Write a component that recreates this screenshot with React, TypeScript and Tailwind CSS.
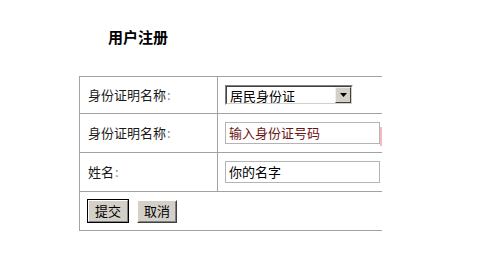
// 用户注册 form - classic table layout

const font = 'font-["Noto_Sans_CJK_SC","Noto_Sans",sans-serif]';

function Row({
  label,
  height,
  children,
}: {
  label: string;
  height: string;
  children: React.ReactNode;
}) {
  return (
    <div className={`flex border-t border-[#a3a3a3] ${height}`}>
      <div className="flex w-[138px] items-center border-r border-[#a3a3a3] pl-[8px] text-[13px] text-[#1a1a1a]">
        {label}
        <span className="ml-[1px] text-[#888]">:</span>
      </div>
      <div className="flex flex-1 items-center pl-[7px]">{children}</div>
    </div>
  );
}

function FakeSelect() {
  return (
    <div className="flex h-[20px] w-[128px] border border-t-[#808080] border-l-[#808080] border-b-white border-r-white">
      <div className="flex flex-1 items-center border border-t-[#404040] border-l-[#404040] border-b-[#d4d0c8] border-r-[#d4d0c8] bg-white">
        <span className="flex-1 pl-[3px] text-[13px] leading-none text-black">居民身份证</span>
        <div className="flex h-[16px] w-[16px] items-center justify-center border border-t-[#f0f0f0] border-l-[#f0f0f0] border-b-[#404040] border-r-[#404040] bg-[#d4d0c8]">
          <svg width="7" height="4" viewBox="0 0 7 4">
            <path d="M0 0h7L3.5 4z" fill="#000" />
          </svg>
        </div>
      </div>
    </div>
  );
}

export default function App() {
  return (
    <div className={`h-[256px] w-[503px] bg-white pt-[28px] ${font}`}>
      {/* Title */}
      <h1 className="ml-[108px] h-[17px] text-[15px] font-bold leading-[17px] text-black">
        用户注册
      </h1>

      {/* Form table */}
      <div className="ml-[79px] mt-[31px] w-[303px] border-l border-[#a3a3a3]">
        <Row label="身份证明名称" height="h-[37px]">
          <FakeSelect />
        </Row>
        <Row label="身份证明名称" height="h-[39px]">
          <div className="relative">
            <div className="flex h-[22px] w-[155px] items-center border border-[#b4b4b4] pl-[3px] text-[13px] text-[#6e1414]">
              输入身份证号码
            </div>
            <div className="absolute left-full top-[5px] h-[19px] w-[2px] bg-[#f3b9c0]" />
          </div>
        </Row>
        <Row label="姓名" height="h-[39px]">
          <div className="flex h-[22px] w-[155px] items-center border border-[#b4b4b4] pl-[3px] text-[13px] text-black">
            你的名字
          </div>
        </Row>
        <div className="flex h-[40px] items-center gap-[8px] border-y border-[#a3a3a3] pl-[7px]">
          <button className="h-[24px] w-[42px] border border-black bg-[#d4d0c8] p-0">
            <div className="flex h-full w-full items-center justify-center border border-t-white border-l-white border-b-[#808080] border-r-[#808080] text-[13px] text-black">
              提交
            </div>
          </button>
          <button className="h-[23px] w-[40px] border border-t-white border-l-white border-b-[#404040] border-r-[#404040] bg-[#d4d0c8] p-0">
            <div className="flex h-full w-full items-center justify-center border border-t-[#d4d0c8] border-l-[#d4d0c8] border-b-[#808080] border-r-[#808080] text-[13px] text-black">
              取消
            </div>
          </button>
        </div>
      </div>
    </div>
  );
}
